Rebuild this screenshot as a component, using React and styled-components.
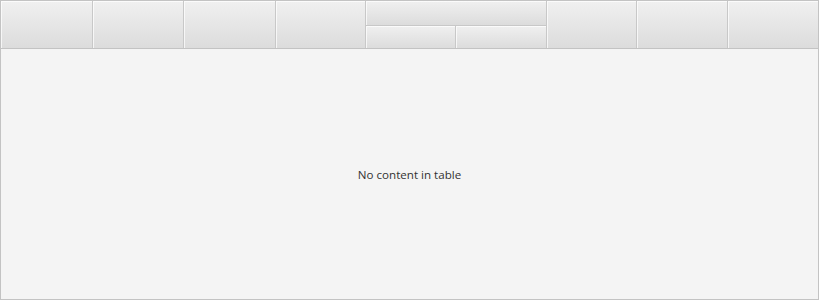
import React from "react";
import styled, { createGlobalStyle } from "styled-components";

const Global = createGlobalStyle`
  html, body { margin: 0; padding: 0; background: #ffffff; }
  #root { width: 820px; height: 301px; }
`;

const Table = styled.div`
  box-sizing: border-box;
  width: 819px;
  height: 300px;
  border: 1px solid #c3c3c3;
  background: #f4f4f4;
  display: flex;
  flex-direction: column;
  font-family: "Segoe UI", "Open Sans", "Noto Sans", sans-serif;
`;

const Header = styled.div`
  display: flex;
  height: 48px;
  box-sizing: border-box;
  border-bottom: 1px solid #c3c3c3;
  flex-shrink: 0;
`;

const Cell = styled.div`
  box-sizing: border-box;
  width: ${(p) => p.$w}px;
  flex-shrink: 0;
  height: ${(p) => (p.$h ? `${p.$h}px` : "100%")};
  background: linear-gradient(#f0f0f0, #dcdcdc);
  border-right: 1px solid #c8c8c8;
  box-shadow: inset 1px 1px 0 rgba(255, 255, 255, 0.7);
  ${(p) => p.$last && "border-right: none;"}
`;

const Group = styled.div`
  display: flex;
  flex-direction: column;
  width: ${(p) => p.$w}px;
  flex-shrink: 0;
`;

const SubRow = styled.div`
  display: flex;
  border-top: 1px solid #c8c8c8;
  flex: 1;
`;

const Body = styled.div`
  flex: 1;
  display: flex;
  align-items: center;
  justify-content: center;
  font-size: 11.6px;
  color: #333333;
`;

export default function App() {
  return (
    <>
      <Global />
      <Table>
        <Header>
          <Cell $w={92} />
          <Cell $w={91} />
          <Cell $w={92} />
          <Cell $w={90} />
          <Group $w={181}>
            <Cell $w={181} $h={24} />
            <SubRow>
              <Cell $w={90} />
              <Cell $w={91} />
            </SubRow>
          </Group>
          <Cell $w={90} />
          <Cell $w={91} />
          <Cell $w={90} $last />
        </Header>
        <Body>No content in table</Body>
      </Table>
    </>
  );
}
